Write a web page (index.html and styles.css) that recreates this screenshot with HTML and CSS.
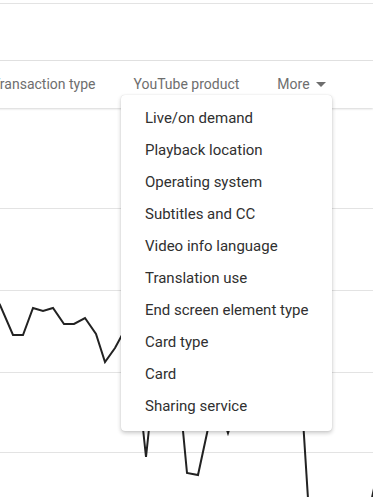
FILE: index.html
```html
<!DOCTYPE html>
<html lang="en">

<head>
    <meta charset="UTF-8">
    <meta name="viewport" content="width=device-width, initial-scale=1.0">
    <title>Analytics</title>
    <link rel="stylesheet" href="styles.css">
</head>

<body>
    <div class="page">
        <div class="summary"></div>

        <ul class="tabs">
            <li class="tab">Transaction type</li>
            <li class="tab">YouTube product</li>
            <li class="tab tab-more">More <span class="caret"></span></li>
        </ul>

        <div class="chart">
            <svg class="chart-svg" width="373" height="389" viewBox="0 0 373 389">
                <g class="grid">
                    <line x1="0" y1="100.5" x2="373" y2="100.5" />
                    <line x1="0" y1="182.5" x2="373" y2="182.5" />
                    <line x1="0" y1="264.5" x2="373" y2="264.5" />
                    <line x1="0" y1="344.5" x2="373" y2="344.5" />
                </g>
                <polyline class="series" points="-6,186 0,197 13,227 23,227 33,200 43,203 53,200 64,216 74,216 85,210 96,226 105,254 115,240 122,227 132,250 141,302 146,349 151,302 160,280 170,290 181,302 187,365 198,367 212,302 222,307 228,325 234,307 250,290 270,300 290,280 303,312 310,422 365,422 378,362" />
            </svg>
        </div>

        <ul class="menu">
            <li class="menu-item">Live/on demand</li>
            <li class="menu-item">Playback location</li>
            <li class="menu-item">Operating system</li>
            <li class="menu-item">Subtitles and CC</li>
            <li class="menu-item">Video info language</li>
            <li class="menu-item">Translation use</li>
            <li class="menu-item">End screen element type</li>
            <li class="menu-item">Card type</li>
            <li class="menu-item">Card</li>
            <li class="menu-item">Sharing service</li>
        </ul>
    </div>
</body>

</html>
```

FILE: styles.css
```css
* {
    padding: 0;
    margin: 0;
    list-style: none;
    box-sizing: border-box;
}

body {
    background: #fff;
    font-family: Roboto, "Liberation Sans", sans-serif;
    overflow: hidden;
}

.page {
    position: relative;
    width: 373px;
    height: 497px;
    overflow: hidden;
}

/* top card area */
.summary {
    margin-top: 3px;
    height: 58px;
    border-top: 1px solid #e3e3e3;
    border-bottom: 1px solid #e3e3e3;
}

/* tab bar */
.tabs {
    position: relative;
    z-index: 1;
    display: flex;
    align-items: center;
    gap: 38px;
    height: 47px;
    margin-left: -8px;
    padding-bottom: 1px;
    background: #fff;
    box-shadow: 0 1px 2px rgba(0, 0, 0, 0.16);
    white-space: nowrap;
}

.tab {
    font-size: 14px;
    color: #6e6e6e;
}

.tab-more {
    display: flex;
    align-items: center;
    gap: 6px;
}

.caret {
    width: 0;
    height: 0;
    border-left: 5px solid transparent;
    border-right: 5px solid transparent;
    border-top: 5px solid #6e6e6e;
}

/* chart */
.chart {
    height: 389px;
}

.chart-svg {
    display: block;
}

.grid line {
    stroke: #e3e3e3;
    stroke-width: 1;
}

.series {
    fill: none;
    stroke: #222;
    stroke-width: 2;
    stroke-linejoin: miter;
}

/* dropdown menu */
.menu {
    position: absolute;
    z-index: 2;
    top: 95px;
    left: 121px;
    width: 211px;
    padding: 7px 0 9px;
    background: #fff;
    border-radius: 4px;
    box-shadow: 0 2px 4px rgba(0, 0, 0, 0.22), 0 0 1px rgba(0, 0, 0, 0.18);
}

.menu-item {
    height: 32px;
    line-height: 32px;
    padding-left: 24px;
    font-size: 15px;
    color: #303030;
    white-space: nowrap;
}
```
